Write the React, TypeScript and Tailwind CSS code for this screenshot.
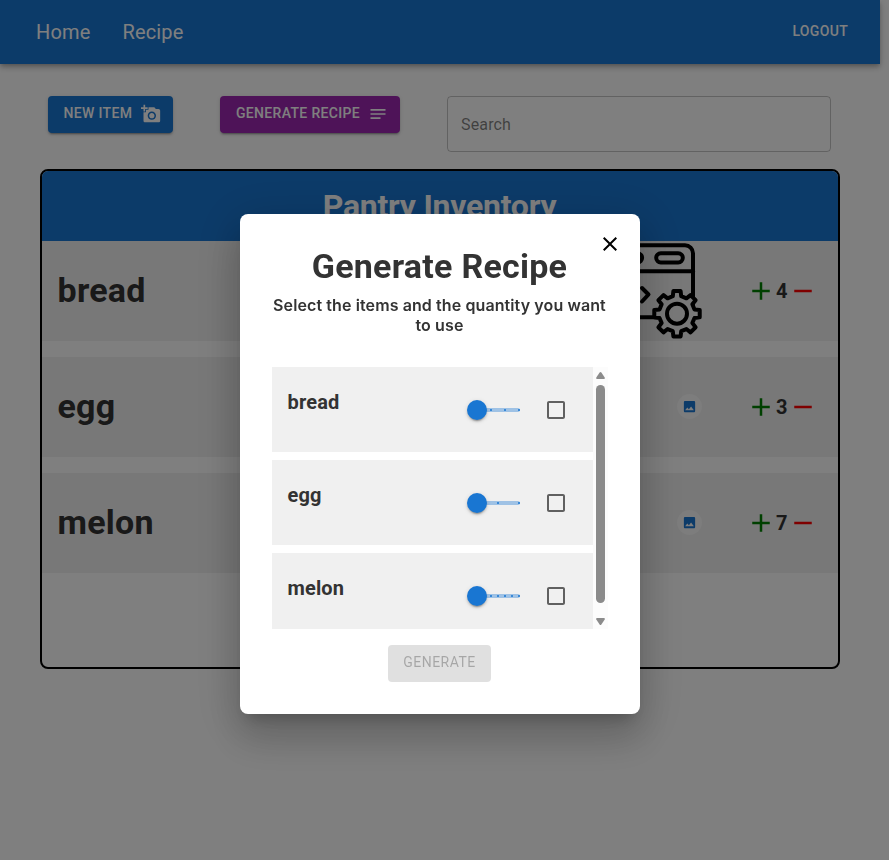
import React from "react";
import { MdAdd, MdAddAPhoto, MdCheckBoxOutlineBlank, MdClose, MdImage, MdNotes, MdRemove } from "react-icons/md";

type Item = { name: string; count: number; custom?: boolean };

const items: Item[] = [
  { name: "bread", count: 4, custom: true },
  { name: "egg", count: 3 },
  { name: "melon", count: 7 },
];

const raised =
  "shadow-[0_3px_1px_-2px_rgba(0,0,0,0.2),0_2px_2px_0_rgba(0,0,0,0.14),0_1px_5px_0_rgba(0,0,0,0.12)]";

function gearPath(cx: number, cy: number) {
  const pts: string[] = [];
  const at = (deg: number, r: number) => {
    const a = (deg * Math.PI) / 180;
    pts.push(`${(cx + r * Math.cos(a)).toFixed(2)} ${(cy + r * Math.sin(a)).toFixed(2)}`);
  };
  for (let i = 0; i < 8; i++) {
    const d = i * 45;
    at(d - 13.5, 18);
    at(d - 9, 23);
    at(d + 9, 23);
    at(d + 13.5, 18);
  }
  return "M" + pts.join("L") + "Z";
}

function CodeGearPicture() {
  return (
    <svg width="100" height="100" viewBox="0 0 100 100" fill="none" stroke="#000" strokeWidth="4" strokeLinecap="round" strokeLinejoin="round">
      <path d="M10 4.3H80a8 8 0 0 1 8 8V76.3H10a8 8 0 0 1-8-8V12.3a8 8 0 0 1 8-8Z" />
      <path d="M2 30.2H88" />
      <rect x="51.2" y="12.2" width="26.6" height="9.2" rx="4.6" />
      <rect x="10.5" y="12.2" width="26.6" height="9.2" rx="4.6" />
      <path d="M37 47l6.5 6.5L37 60.5" />
      <path d={gearPath(72, 72.7)} fill="#f0f0f0" />
      <circle cx="72" cy="72.7" r="10" />
    </svg>
  );
}

function PantryRow({ item }: { item: Item }) {
  return (
    <div className="flex h-[100px] shrink-0 items-center bg-[#f0f0f0] pr-5 pl-[15.5px]">
      <h2 className="flex-1 pb-0.5 text-[34px] leading-[42px] font-bold tracking-[0.25px] text-[#333]">{item.name}</h2>
      {item.custom ? (
        <div className="mr-[41px] size-[100px]">
          <CodeGearPicture />
        </div>
      ) : (
        <div className="mr-11 mb-0.5 flex size-[25px] items-center justify-center rounded-full bg-[#fafafa]">
          <MdImage size={15} className="text-[#1976d2]" />
        </div>
      )}
      <div className="flex items-center text-[20px] leading-8 font-bold text-[#333]">
        <MdAdd size={30} className="text-[green]" />
        <span className="w-3 pr-px text-center">{item.count}</span>
        <MdRemove size={30} className="text-[red]" />
      </div>
    </div>
  );
}

function QuantitySlider({ max }: { max: number }) {
  const steps = Array.from({ length: max }, (_, i) => i);
  return (
    <div className="relative h-1 w-[42px]">
      <div className="h-full w-[43px] rounded-full bg-[#1976d2]/38" />
      {steps.map((s) => (
        <span
          key={s}
          className="absolute top-px size-0.5 -translate-x-px rounded-[1px] bg-[#1976d2]"
          style={{ left: `${(s / (max - 1)) * 100}%` }}
        />
      ))}
      <span className={`absolute -top-2 -left-2.5 size-5 rounded-full bg-[#1976d2] ${raised}`} />
    </div>
  );
}

function RecipeRow({ item }: { item: Item }) {
  return (
    <div className="flex h-[85px] shrink-0 items-center bg-[#f0f0f0] pr-[25px] pl-[15.5px]">
      <h3 className="mb-4 flex-1 text-[20px] leading-8 font-bold tracking-[0.15px] text-[#333]">{item.name}</h3>
      <div className="mr-[25px] pt-px">
        <QuantitySlider max={item.count} />
      </div>
      <MdCheckBoxOutlineBlank size={24} className="mt-px text-black/60" />
    </div>
  );
}

function GenerateDialog() {
  return (
    <div className="fixed inset-0 bg-black/50">
      <div className="relative mt-[214px] ml-[240px] flex h-[500px] w-[400px] flex-col items-center rounded-lg bg-white p-8 pt-[31px] shadow-[0_11px_15px_-7px_rgba(0,0,0,0.2),0_24px_38px_3px_rgba(0,0,0,0.14),0_9px_46px_8px_rgba(0,0,0,0.12)]">
        <button className="absolute top-[18px] right-[18px]">
          <MdClose size={24} />
        </button>
        <h1 className="pr-px text-[34px] leading-[42px] font-bold tracking-[0.25px] text-[#333]">Generate Recipe</h1>
        <p className="mt-2 -ml-px text-center font-[Inter] text-[16px] leading-5 font-semibold tracking-[0.1px] text-[#333]">
          Select the items and the quantity you want to use
        </p>
        <div className="mt-8 flex h-[262px] w-full shrink-0 overflow-hidden">
          <div className="flex w-[321px] flex-col gap-2">
            {items.map((item) => (
              <RecipeRow key={item.name} item={item} />
            ))}
          </div>
          <div className="flex w-[15px] flex-col items-center bg-[#fcfcfc] pt-[5px] pb-1">
            <svg width="9" height="7" viewBox="0 0 9 7" fill="#8b8b8b">
              <path d="M3.6.6Q4.5-.4 5.4.6L8.7 5.6Q9.2 7 8 7H1Q-.2 7 .3 5.6Z" />
            </svg>
            <div className="mt-1.5 h-[218px] w-[9px] rounded-full bg-[#8b8b8b]" />
            <svg className="mt-auto" width="9" height="7" viewBox="0 0 9 7" fill="#8b8b8b">
              <path d="M3.6 6.4Q4.5 7.4 5.4 6.4L8.7 1.4Q9.2 0 8 0H1Q-.2 0 .3 1.4Z" />
            </svg>
          </div>
        </div>
        <button className="mt-4 mr-px h-[36.5px] w-[103px] rounded bg-black/12 pb-0.5 text-sm tracking-[0.5px] text-black/26">
          GENERATE
        </button>
      </div>
    </div>
  );
}

export default function App() {
  return (
    <div className="h-[860px] overflow-hidden bg-white font-[Roboto,sans-serif]">
      <header className="flex h-16 w-[880px] items-center bg-[#1976d2] pr-8 pl-9 text-white shadow-[0_2px_4px_-1px_rgba(0,0,0,0.2),0_4px_5px_0_rgba(0,0,0,0.14),0_1px_10px_0_rgba(0,0,0,0.12)]">
        <nav className="flex flex-1 gap-8 text-[20px] leading-8 tracking-[0.15px]">
          <a>Home</a>
          <a>Recipe</a>
        </nav>
        <button className="pb-0.5 text-sm font-medium tracking-[0.33px]">LOGOUT</button>
      </header>
      <main className="w-[880px] px-10 pt-8">
        <div className="flex items-start pl-2">
          <button className={`flex h-[36.5px] w-[125px] items-center justify-between rounded bg-[#1976d2] pr-3 pl-[15.5px] text-sm font-medium tracking-[0.33px] text-white ${raised}`}>
            <span className="pb-0.5">NEW ITEM</span>
            <MdAddAPhoto size={20} />
          </button>
          <button className={`ml-[47px] flex h-[36.5px] w-[180px] items-center justify-between rounded bg-[#9c27b0] pr-3 pl-4 text-sm font-medium tracking-[0.33px] text-white ${raised}`}>
            <span className="pb-0.5">GENERATE RECIPE</span>
            <MdNotes size={20} />
          </button>
          <div className="ml-[47px] flex h-14 w-96 items-center rounded border border-black/23 px-[13px] pt-0.5 text-base tracking-[0.15px] text-black/50">
            Search
          </div>
        </div>
        <section className="mt-[17px] flex h-[500px] flex-col overflow-hidden rounded-lg border-2 border-black">
          <div className="flex h-[70px] shrink-0 items-center justify-center bg-[#1976d2]">
            <h1 className="pr-px pb-px text-[32px] leading-[42px] font-bold tracking-[-0.25px] text-white">Pantry Inventory</h1>
          </div>
          <div className="flex flex-col gap-4">
            {items.map((item) => (
              <PantryRow key={item.name} item={item} />
            ))}
          </div>
        </section>
      </main>
      <GenerateDialog />
    </div>
  );
}
